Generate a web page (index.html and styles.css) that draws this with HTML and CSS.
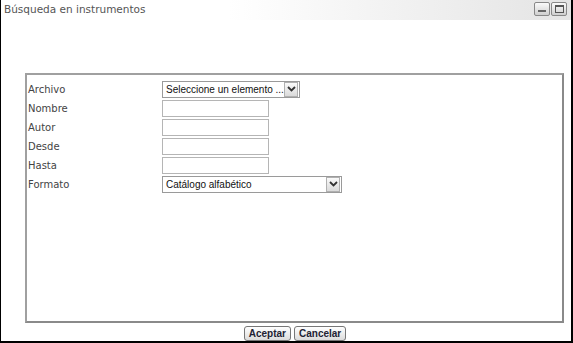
FILE: index.html
```html
<!DOCTYPE html>
<html lang="es">
<head>
    <meta charset="UTF-8">
    <title>Búsqueda en instrumentos</title>
    <link rel="stylesheet" href="styles.css">
</head>
<body>
    <div class="ventana">
        <div class="cabecera">
            <span class="titulo">Búsqueda en instrumentos</span>
            <div class="botones">
                <span class="btnVentana"><span class="minimizar"></span></span>
                <span class="btnVentana"><span class="maximizar"></span></span>
            </div>
        </div>

        <div class="panel">
            <div class="fila">
                <label for="archivo">Archivo</label>
                <div class="combo ancho1">
                    <span class="comboTexto">Seleccione un elemento ...</span>
                    <span class="flecha"><svg width="9" height="6" viewBox="0 0 9 6"><path d="M1 1 L4.5 4.5 L8 1" fill="none" stroke="#333" stroke-width="1.8"/></svg></span>
                </div>
            </div>
            <div class="fila">
                <label for="nombre">Nombre</label>
                <input type="text" id="nombre" class="caja">
            </div>
            <div class="fila">
                <label for="autor">Autor</label>
                <input type="text" id="autor" class="caja">
            </div>
            <div class="fila">
                <label for="desde">Desde</label>
                <input type="text" id="desde" class="caja">
            </div>
            <div class="fila">
                <label for="hasta">Hasta</label>
                <input type="text" id="hasta" class="caja">
            </div>
            <div class="fila">
                <label for="formato">Formato</label>
                <div class="combo ancho2">
                    <span class="comboTexto">Catálogo alfabético</span>
                    <span class="flecha"><svg width="9" height="6" viewBox="0 0 9 6"><path d="M1 1 L4.5 4.5 L8 1" fill="none" stroke="#333" stroke-width="1.8"/></svg></span>
                </div>
            </div>
        </div>

        <div class="acciones">
            <button class="boton">Aceptar</button>
            <button class="boton">Cancelar</button>
        </div>
    </div>
</body>
</html>
```

FILE: styles.css
```css
body {
    margin: 0;
    background: #fff;
}

.ventana {
    width: 570px;
    height: 341px;
    border-left: 1px solid #000;
    border-right: 2px solid #000;
    border-bottom: 2px solid #000;
    display: flex;
    flex-direction: column;
    font-family: "DejaVu Sans", Verdana, sans-serif;
}

.cabecera {
    height: 20px;
    display: flex;
    justify-content: space-between;
    align-items: flex-start;
    background: linear-gradient(to right, #fff 0%, #fff 40%, #e4e4e4 100%);
}

.titulo {
    font-size: 10.5px;
    color: #555;
    padding: 3px 0 0 3px;
}

.botones {
    display: flex;
    gap: 1px;
    padding: 2px 4px 0 0;
}

.btnVentana {
    width: 14px;
    height: 12px;
    border: 1px solid #888;
    border-radius: 2px;
    background: linear-gradient(#fafafa, #cfcfcf);
    display: flex;
    align-items: center;
    justify-content: center;
}

.minimizar {
    width: 8px;
    height: 2px;
    margin-top: 3px;
    background: #666;
}

.maximizar {
    width: 7px;
    height: 5px;
    border: 1px solid #555;
    border-top-width: 2px;
}

.panel {
    margin: 53px 7px 0 24px;
    height: 244px;
    border: 2px solid #a0a0a0;
    border-right-color: #8a8a8a;
    border-bottom-color: #8a8a8a;
    padding: 5px 0 0 1px;
    display: flex;
    flex-direction: column;
}

.fila {
    display: flex;
    align-items: center;
    height: 19px;
}

.fila label {
    width: 134px;
    flex-shrink: 0;
    font-size: 10px;
    color: #444;
}

.caja {
    width: 107px;
    height: 17px;
    box-sizing: border-box;
    margin: 0;
    border: 1px solid #b5b5b5;
    background: #fff;
}

.combo {
    height: 17px;
    box-sizing: border-box;
    border: 1px solid #9a9a9a;
    display: flex;
    align-items: center;
    justify-content: space-between;
    background: #fff;
    overflow: hidden;
}

.ancho1 {
    width: 138px;
}

.ancho2 {
    width: 180px;
}

.comboTexto {
    font-family: "Liberation Sans", Arial, sans-serif;
    font-size: 10px;
    color: #111;
    padding-left: 3px;
    white-space: nowrap;
}

.flecha {
    width: 12px;
    height: 13px;
    flex-shrink: 0;
    margin-right: 1px;
    border: 1px solid #b0b0b0;
    background: linear-gradient(#fafafa, #dadada);
    display: flex;
    align-items: center;
    justify-content: center;
}

.acciones {
    display: flex;
    justify-content: center;
    gap: 3px;
    padding: 3px 0 0 18px;
}

.boton {
    height: 15px;
    padding: 0 4px;
    border: 1px solid #777;
    border-radius: 3px;
    background: linear-gradient(#fff, #dcdcdc);
    font-family: "Liberation Sans", Arial, sans-serif;
    font-size: 10px;
    font-weight: bold;
    color: #223;
    line-height: 12px;
}
```
